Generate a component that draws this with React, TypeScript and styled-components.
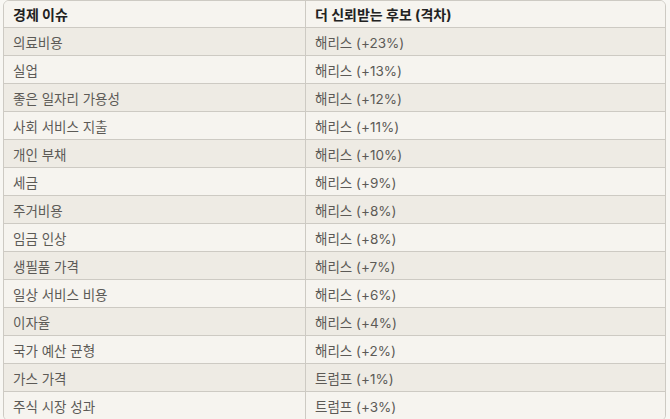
import styled, { createGlobalStyle } from 'styled-components';

const rows: [string, string][] = [
  ['의료비용', '해리스 (+23%)'],
  ['실업', '해리스 (+13%)'],
  ['좋은 일자리 가용성', '해리스 (+12%)'],
  ['사회 서비스 지출', '해리스 (+11%)'],
  ['개인 부채', '해리스 (+10%)'],
  ['세금', '해리스 (+9%)'],
  ['주거비용', '해리스 (+8%)'],
  ['임금 인상', '해리스 (+8%)'],
  ['생필품 가격', '해리스 (+7%)'],
  ['일상 서비스 비용', '해리스 (+6%)'],
  ['이자율', '해리스 (+4%)'],
  ['국가 예산 균형', '해리스 (+2%)'],
  ['가스 가격', '트럼프 (+1%)'],
  ['주식 시장 성과', '트럼프 (+3%)'],
];

const GlobalStyle = createGlobalStyle`
  html, body {
    margin: 0;
    padding: 0;
    background: #f8f7f3;
    overflow: hidden;
  }
  body {
    font-family: Inter, "Noto Sans CJK KR", sans-serif;
  }
`;

const App = () => {
  return (
    <>
      <GlobalStyle />
      <Page>
        <Table>
          <thead>
            <tr>
              <HeadCell>경제 이슈</HeadCell>
              <HeadCell>더 신뢰받는 후보 (격차)</HeadCell>
            </tr>
          </thead>
          <tbody>
            {rows.map(([issue, lead], i) => (
              <Row key={issue} $odd={i % 2 === 0}>
                <Cell>{issue}</Cell>
                <Cell>{lead}</Cell>
              </Row>
            ))}
          </tbody>
        </Table>
      </Page>
    </>
  );
};

export default App;

const Page = styled.div`
  padding: 0 5px 0 3px;
`;

const Table = styled.table`
  width: 663px;
  border-collapse: separate;
  border-spacing: 0;
  border: 1px solid #cdcac3;
  border-radius: 6px;
  table-layout: fixed;
  overflow: hidden;
`;

const HeadCell = styled.th`
  height: 27px;
  padding: 0 9px;
  text-align: left;
  font-size: 14px;
  font-weight: 700;
  color: #222;
  background: #f6f4ef;
  border-bottom: 1px solid #cdcac3;
  box-sizing: border-box;

  &:first-child {
    width: 302px;
    border-right: 1px solid #cdcac3;
  }
`;

const Row = styled.tr<{ $odd: boolean }>`
  background: ${(p) => (p.$odd ? '#eeebe4' : '#f6f4ef')};
`;

const Cell = styled.td`
  height: 27px;
  padding: 0 9px;
  font-size: 13.5px;
  color: #5c5a56;
  border-bottom: 1px solid #cdcac3;

  &:first-child {
    border-right: 1px solid #cdcac3;
  }
`;
